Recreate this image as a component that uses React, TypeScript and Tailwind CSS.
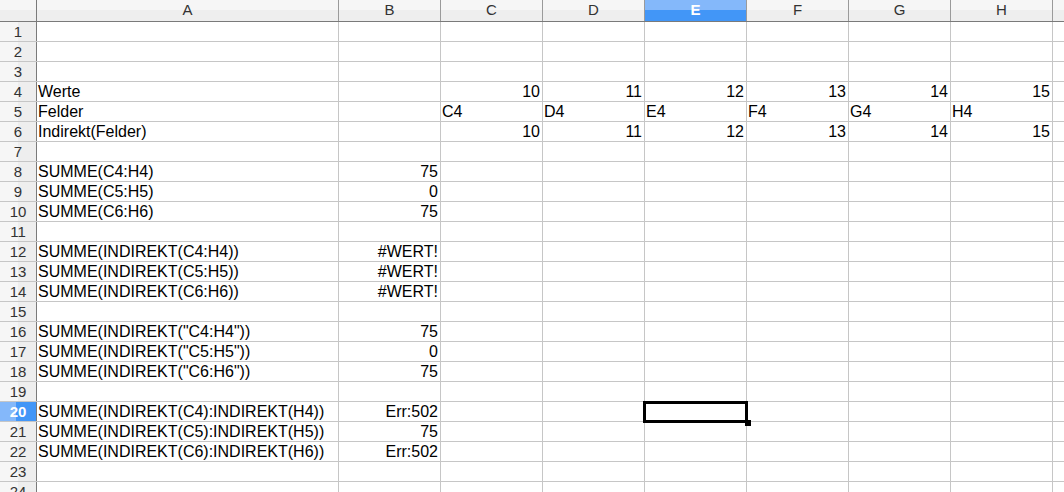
const cols = [
  { name: "A", w: "w-[302px]" },
  { name: "B", w: "w-[102px]" },
  { name: "C", w: "w-[102px]" },
  { name: "D", w: "w-[102px]" },
  { name: "E", w: "w-[102px]" },
  { name: "F", w: "w-[102px]" },
  { name: "G", w: "w-[102px]" },
  { name: "H", w: "w-[102px]" },
  { name: "I", w: "w-[102px]" },
];

type Cell = { v: string; right?: boolean };

const data: Record<number, Record<string, Cell>> = {
  4: {
    A: { v: "Werte" },
    C: { v: "10", right: true },
    D: { v: "11", right: true },
    E: { v: "12", right: true },
    F: { v: "13", right: true },
    G: { v: "14", right: true },
    H: { v: "15", right: true },
  },
  5: {
    A: { v: "Felder" },
    C: { v: "C4" },
    D: { v: "D4" },
    E: { v: "E4" },
    F: { v: "F4" },
    G: { v: "G4" },
    H: { v: "H4" },
  },
  6: {
    A: { v: "Indirekt(Felder)" },
    C: { v: "10", right: true },
    D: { v: "11", right: true },
    E: { v: "12", right: true },
    F: { v: "13", right: true },
    G: { v: "14", right: true },
    H: { v: "15", right: true },
  },
  8: { A: { v: "SUMME(C4:H4)" }, B: { v: "75", right: true } },
  9: { A: { v: "SUMME(C5:H5)" }, B: { v: "0", right: true } },
  10: { A: { v: "SUMME(C6:H6)" }, B: { v: "75", right: true } },
  12: { A: { v: "SUMME(INDIREKT(C4:H4))" }, B: { v: "#WERT!", right: true } },
  13: { A: { v: "SUMME(INDIREKT(C5:H5))" }, B: { v: "#WERT!", right: true } },
  14: { A: { v: "SUMME(INDIREKT(C6:H6))" }, B: { v: "#WERT!", right: true } },
  16: { A: { v: 'SUMME(INDIREKT("C4:H4"))' }, B: { v: "75", right: true } },
  17: { A: { v: 'SUMME(INDIREKT("C5:H5"))' }, B: { v: "0", right: true } },
  18: { A: { v: 'SUMME(INDIREKT("C6:H6"))' }, B: { v: "75", right: true } },
  20: { A: { v: "SUMME(INDIREKT(C4):INDIREKT(H4))" }, B: { v: "Err:502", right: true } },
  21: { A: { v: "SUMME(INDIREKT(C5):INDIREKT(H5))" }, B: { v: "75", right: true } },
  22: { A: { v: "SUMME(INDIREKT(C6):INDIREKT(H6))" }, B: { v: "Err:502", right: true } },
};

const rows = Array.from({ length: 24 }, (_, i) => i + 1);

export default function App() {
  return (
    <div className="w-[1064px] h-[492px] overflow-hidden bg-white font-['Liberation_Sans',Arial,sans-serif] text-black">
      <div className="flex h-[22px] border-b border-[#7a7a7a]">
        <div className="w-[37px] shrink-0 border-r border-[#7a7a7a] bg-[linear-gradient(#f6f6f6_50%,#eeeeee_50%)]" />
        {cols.map((c) => (
          <div
            key={c.name}
            className={`${c.w} shrink-0 border-r border-[#9a9a9a] flex items-center justify-center text-[15px] ${
              c.name === "E"
                ? "bg-[linear-gradient(#84b8fa_50%,#4296f7_50%)] text-white font-bold"
                : "bg-[linear-gradient(#f6f6f6_50%,#eeeeee_50%)] text-[#333]"
            }`}
          >
            {c.name}
          </div>
        ))}
      </div>
      {rows.map((r) => (
        <div key={r} className="flex h-[20px] border-b border-[#c6c6c6]">
          <div
            className={`w-[37px] shrink-0 border-r border-[#7a7a7a] flex items-end justify-center text-[15px] leading-[18px] ${
              r === 20
                ? "bg-[linear-gradient(90deg,#84b8fa_45%,#4296f7_45%)] text-white font-bold"
                : "bg-[linear-gradient(90deg,#f6f6f6_50%,#eeeeee_50%)] text-[#333]"
            }`}
          >
            {r}
          </div>
          {cols.map((c) => {
            const cell = data[r]?.[c.name];
            const selected = r === 20 && c.name === "E";
            return (
              <div
                key={c.name}
                className={`${c.w} shrink-0 border-r border-[#c6c6c6] relative flex items-end text-[16px] leading-[18px] whitespace-nowrap ${
                  cell?.right ? "justify-end pr-[2px]" : "pl-[1px]"
                }`}
              >
                {cell?.v}
                {selected && (
                  <>
                    <div className="absolute z-10 -left-[2px] -top-[1px] w-[105px] h-[22px] border-[3px] border-black" />
                    <div className="absolute z-10 right-[-5px] bottom-[-5px] w-[6px] h-[6px] bg-black" />
                  </>
                )}
              </div>
            );
          })}
        </div>
      ))}
    </div>
  );
}
